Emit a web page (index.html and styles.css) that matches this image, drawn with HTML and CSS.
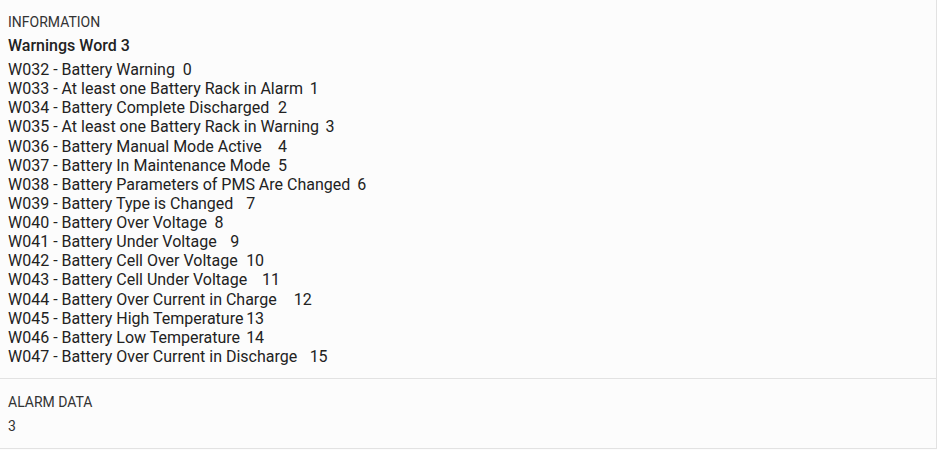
FILE: index.html
```html
<!DOCTYPE html>
<html>
<head>
<meta charset="utf-8">
<link rel="stylesheet" href="styles.css">
</head>
<body>
<div class="panel">
  <section class="cell cell-info">
    <div class="label">INFORMATION</div>
    <div class="title">Warnings Word 3</div>
    <div class="rows">
      <div class="row">W032 - Battery Warning	0</div>
      <div class="row">W033 - At least one Battery Rack in Alarm	1</div>
      <div class="row">W034 - Battery Complete Discharged	2</div>
      <div class="row">W035 - At least one Battery Rack in Warning	3</div>
      <div class="row">W036 - Battery Manual Mode Active	4</div>
      <div class="row">W037 - Battery In Maintenance Mode	5</div>
      <div class="row">W038 - Battery Parameters of PMS Are Changed	6</div>
      <div class="row">W039 - Battery Type is Changed	7</div>
      <div class="row">W040 - Battery Over Voltage	8</div>
      <div class="row">W041 - Battery Under Voltage	9</div>
      <div class="row">W042 - Battery Cell Over Voltage	10</div>
      <div class="row">W043 - Battery Cell Under Voltage	11</div>
      <div class="row">W044 - Battery Over Current in Charge	12</div>
      <div class="row">W045 - Battery High Temperature	13</div>
      <div class="row">W046 - Battery Low Temperature	14</div>
      <div class="row">W047 - Battery Over Current in Discharge	15</div>
    </div>
  </section>
  <section class="cell cell-alarm">
    <div class="label">ALARM DATA</div>
    <div class="value">3</div>
  </section>
</div>
</body>
</html>
```
FILE: styles.css
```css
html, body {
  margin: 0;
  padding: 0;
  background: #fcfcfc;
}
body {
  font-family: Roboto, "Noto Sans", sans-serif;
  color: #222;
}
.panel {
  display: flex;
  flex-direction: column;
  width: 937px;
  box-sizing: border-box;
}
.cell {
  border-right: 1px solid #e2e2e2;
  border-bottom: 1px solid #e2e2e2;
  padding: 13px 8px 12px;
}
.cell-alarm {
  padding-top: 14px;
}
.label {
  font-size: 14px;
  line-height: 19px;
  color: #333;
  margin-bottom: 4px;
}
.cell-alarm .label {
  margin-bottom: 5px;
}
.title {
  font-size: 16px;
  font-weight: 500;
  line-height: 19px;
  margin-bottom: 5px;
}
.row {
  font-size: 16px;
  line-height: 19.13px;
  white-space: pre;
  tab-size: 4;
}
.value {
  font-size: 14px;
  line-height: 19px;
  color: #333;
}
```
